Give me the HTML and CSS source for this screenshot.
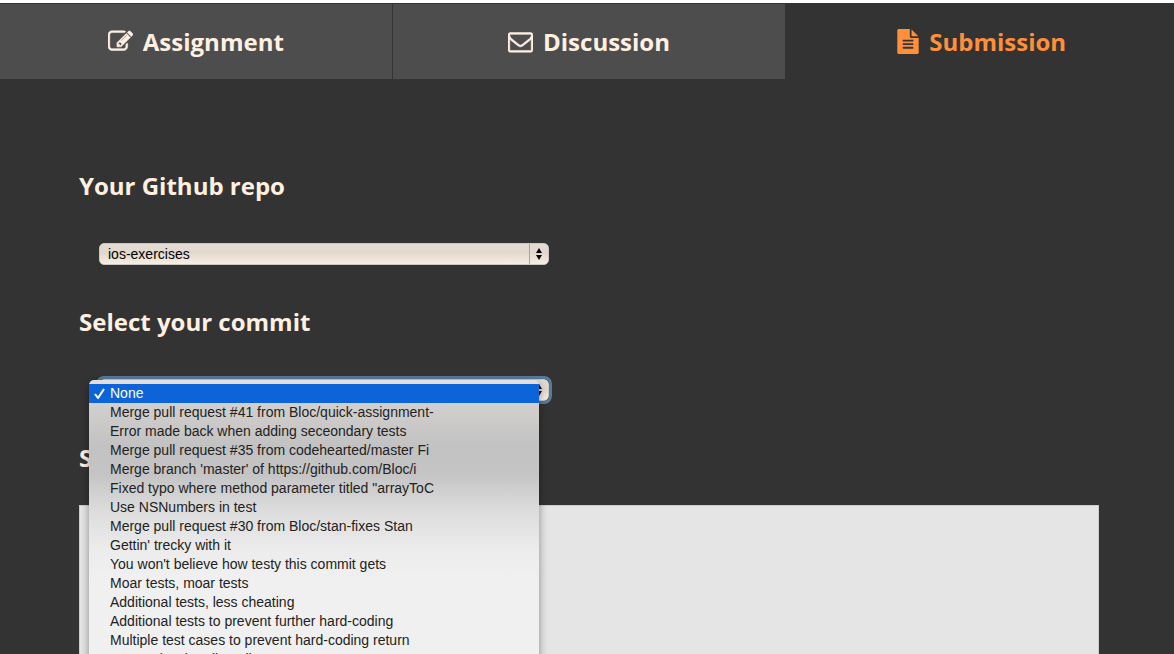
FILE: index.html
```html
<!DOCTYPE html>
<html lang="en">
<head>
<meta charset="utf-8">
<title>Submission</title>
<link rel="stylesheet" href="styles.css">
</head>
<body>
<nav class="tabs">
  <a class="tab" href="#assignment">
    <svg class="icon" viewBox="0 0 1792 1792" aria-hidden="true"><path d="M888 1184l116-116-152-152-116 116v56h96v96h56zm440-720q-16-16-33 1l-350 350q-17 17-1 33t33-1l350-350q17-17 1-33zm80 594v190q0 119-84.500 203.500t-203.500 84.500h-832q-119 0-203.500-84.500t-84.500-203.500v-832q0-119 84.500-203.500t203.500-84.500h832q63 0 117 25 15 7 18 23 3 17-9 29l-49 49q-14 14-32 8-23-6-45-6h-832q-66 0-113 47t-47 113v832q0 66 47 113t113 47h832q66 0 113-47t47-113v-126q0-13 9-22l64-64q15-15 35-7t20 29zm-96-738l288 288-672 672h-288v-288zm444 132l-92 92-288-288 92-92q28-28 68-28t68 28l152 152q28 28 28 68t-28 68z"/></svg>
    <span>Assignment</span>
  </a>
  <a class="tab" href="#discussion">
    <svg class="icon" viewBox="0 0 1792 1792" aria-hidden="true"><path d="M1664 1504v-768q-32 36-69 66-268 206-426 338-51 43-83 67t-86.500 48.500-102.500 24.500h-2q-48 0-102.500-24.500t-86.500-48.500-83-67q-158-132-426-338-37-30-69-66v768q0 13 9.500 22.500t22.500 9.500h1472q13 0 22.500-9.500t9.500-22.500zm0-1051v-24.500l-.5-13-3-12.500-5.500-9-9-7.500-14-2.500h-1472q-13 0-22.500 9.500t-9.500 22.500q0 168 147 284 193 152 401 317 6 5 35 29.500t46 37.500 44.500 31.500 50.500 27.500 43 9h2q20 0 43-9t50.500-27.500 44.500-31.500 46-37.500 35-29.500q208-165 401-317 54-43 100.500-115.500t46.500-131.500zm128-37v1088q0 66-47 113t-113 47h-1472q-66 0-113-47t-47-113v-1088q0-66 47-113t113-47h1472q66 0 113 47t47 113z"/></svg>
    <span>Discussion</span>
  </a>
  <a class="tab tab-active" href="#submission" aria-current="page">
    <svg class="icon icon-file" viewBox="128 0 1536 1792" aria-hidden="true"><path d="M1596 476q14 14 28 36h-472v-472q22 14 36 28zm-476 164h544v1056q0 40-28 68t-68 28h-1344q-40 0-68-28t-28-68v-1600q0-40 28-68t68-28h800v544q0 40 28 68t68 28zm160 736v-64q0-14-9-23t-23-9h-704q-14 0-23 9t-9 23v64q0 14 9 23t23 9h704q14 0 23-9t9-23zm0-256v-64q0-14-9-23t-23-9h-704q-14 0-23 9t-9 23v64q0 14 9 23t23 9h704q14 0 23-9t9-23zm0-256v-64q0-14-9-23t-23-9h-704q-14 0-23 9t-9 23v64q0 14 9 23t23 9h704q14 0 23-9t9-23z"/></svg>
    <span>Submission</span>
  </a>
</nav>
<form class="form">
  <section class="field">
    <label class="title" for="repo">Your Github repo</label>
    <div class="control">
      <select class="select" id="repo"><option>ios-exercises</option></select>
      <svg class="arrows" viewBox="0 0 8 14" aria-hidden="true"><path d="M4 1l3 5H1zM1 8h6l-3 5z"/></svg>
    </div>
  </section>
  <section class="field">
    <label class="title" for="commit">Select your commit</label>
    <div class="control">
      <select class="select select-focus" id="commit"><option>None</option></select>
      <svg class="arrows" viewBox="0 0 8 14" aria-hidden="true"><path d="M4 1l3 5H1zM1 8h6l-3 5z"/></svg>
      <ul class="menu" role="listbox" aria-label="Commits">
        <li class="item item-active" role="option" aria-selected="true"><svg class="check" viewBox="0 0 11 11" aria-hidden="true"><path d="M1 6l3 4L10 1"/></svg>None</li>
        <li class="item" role="option">Merge pull request #41 from Bloc/quick-assignment-</li>
        <li class="item" role="option">Error made back when adding seceondary tests</li>
        <li class="item" role="option">Merge pull request #35 from codehearted/master Fi</li>
        <li class="item" role="option">Merge branch 'master' of https://github.com/Bloc/i</li>
        <li class="item" role="option">Fixed typo where method parameter titled "arrayToC</li>
        <li class="item" role="option">Use NSNumbers in test</li>
        <li class="item" role="option">Merge pull request #30 from Bloc/stan-fixes Stan</li>
        <li class="item" role="option">Gettin' trecky with it</li>
        <li class="item" role="option">You won't believe how testy this commit gets</li>
        <li class="item" role="option">Moar tests, moar tests</li>
        <li class="item" role="option">Additional tests, less cheating</li>
        <li class="item" role="option">Additional tests to prevent further hard-coding</li>
        <li class="item" role="option">Multiple test cases to prevent hard-coding return</li>
        <li class="item" role="option">Correct hard-coding all</li>
      </ul>
    </div>
  </section>
  <section class="field field-notes">
    <label class="title" for="notes">S</label>
    <textarea class="notes" id="notes"></textarea>
  </section>
</form>
</body>
</html>
```
FILE: styles.css
```css
* { box-sizing: border-box; }

body {
  display: flex;
  flex-direction: column;
  margin: 0;
  height: 100vh;
  overflow: hidden;
  background: #333;
  border-top: 3px solid #fff;
  color: #fff0e2;
  font-family: "Open Sans", sans-serif;
}

.tabs {
  display: grid;
  grid-template-columns: repeat(3, 1fr);
  margin-right: -4px;
  padding-top: 1px;
}

.tab {
  display: flex;
  align-items: center;
  justify-content: center;
  gap: 10px;
  height: 75px;
  padding-bottom: 1px;
  background: #4d4d4d;
  color: #fff0e2;
  font-size: 24px;
  font-weight: 700;
  text-decoration: none;
}

.tab:first-child { border-right: 1px solid #333; }

.tab-active {
  background: #333;
  color: #ff8f3b;
}

.icon {
  width: 25px;
  height: 25px;
  fill: currentColor;
  stroke: currentColor;
  stroke-width: 40;
}

.icon-file {
  width: 22px;
  stroke: none;
}

.form {
  display: flex;
  flex: 1;
  flex-direction: column;
  min-height: 0;
  overflow: hidden;
  padding: 85px 75px 0 79px;
}

.field {
  flex: none;
  height: 136px;
}

.title {
  display: block;
  height: 79px;
  font-size: 24px;
  font-weight: 700;
  line-height: 44px;
}

.control {
  position: relative;
  width: 450px;
  margin-left: 20px;
}

.select {
  display: block;
  width: 100%;
  height: 22px;
  padding: 0 8px;
  appearance: none;
  border: 1px solid #c9c7c4;
  border-radius: 5px;
  background: linear-gradient(90deg, transparent 429px, #aaa49c 429px, #aaa49c 430px, transparent 430px), linear-gradient(#e4dbd2 0, #e0d8cf 48%, #e5dbce 52%, #f7efe4);
  color: #000;
  font: 14px/20px "Liberation Sans", Arial, sans-serif;
}

.select-focus {
  outline: 3px solid #57799a;
}

.arrows {
  position: absolute;
  top: 4px;
  right: 6px;
  width: 8px;
  height: 14px;
  fill: #000;
}

.menu {
  position: absolute;
  top: 1px;
  left: -10px;
  width: 100%;
  margin: 0;
  padding: 4px 0 0;
  list-style: none;
  border-radius: 5px 5px 0 0;
  background: linear-gradient(#e2dfdc 0, #d2d0ce 24px, #c2c2c2 66px, #c4c4c4 94px, #dcdcdc 130px, #ececec 170px, #f0f0f0 200px);
  box-shadow: 0 3px 9px rgba(0, 0, 0, 0.4);
}

.item {
  position: relative;
  height: 19px;
  padding-left: 21px;
  overflow: hidden;
  color: #222;
  font: 14px/19px "Liberation Sans", Arial, sans-serif;
  white-space: nowrap;
}

.item-active {
  background: #0c64d8;
  color: #fff;
}

.check {
  position: absolute;
  top: 4px;
  left: 5px;
  width: 11px;
  height: 11px;
  fill: none;
  stroke: #fff;
  stroke-width: 2;
}

.field-notes {
  display: flex;
  flex: 1;
  flex-direction: column;
  min-height: 0;
}

.field-notes .title {
  flex: none;
  height: 69px;
}

.notes {
  display: block;
  flex: 1;
  width: 100%;
  min-height: 0;
  border: 1px solid #ccc;
  border-bottom: 0;
  background: #e5e5e5;
  resize: none;
}
```
